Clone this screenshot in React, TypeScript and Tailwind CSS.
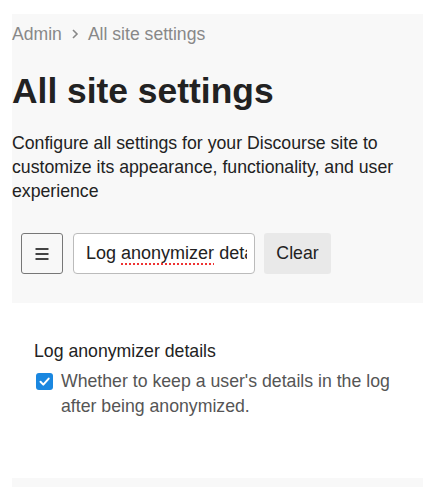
export default function App() {
  return (
    <div className="min-h-[500px] bg-white px-3 pt-[14px] font-['Liberation_Sans',Arial,sans-serif] text-[#222]">
      <section className="bg-[#f8f8f8] pb-[29px]">
        <nav className="flex items-center gap-1 pt-[8px] text-[17.6px] leading-[24px] text-[#888]">
          <span>Admin</span>
          <svg width="14" height="14" viewBox="0 0 14 14" className="mx-[2px]">
            <path d="M5 3l4 4-4 4" fill="none" stroke="#888" strokeWidth="1.6" />
          </svg>
          <span>All site settings</span>
        </nav>
        <h1 className="mt-[23px] text-[35.4px] font-bold leading-[44px] text-[#222]">All site settings</h1>
        <p className="mt-[18px] pr-4 text-[17.7px] leading-[24px] text-[#222]">
          Configure all settings for your Discourse site to customize its appearance, functionality, and user experience
        </p>
        <div className="mt-[30px] flex items-center pl-[9px]">
          <button className="flex h-[41px] w-[42px] items-center justify-center rounded-[3px] border border-[#777] bg-[#f8f8f8]">
            <svg width="16" height="14" viewBox="0 0 16 14">
              <path d="M1.5 2h13M1.5 7h13M1.5 12h13" stroke="#444" strokeWidth="1.8" />
            </svg>
          </button>
          <div className="ml-[10px] flex h-[41px] w-[182px] items-center rounded-[4px] border border-[#bbb] bg-white pl-[12px] pr-[7px] text-[18px] text-[#222]">
            <span className="overflow-hidden whitespace-nowrap">
              Log{" "}
              <span className="underline decoration-[#e33] decoration-dotted decoration-[1.5px] underline-offset-[4px]">anonymizer</span>{" "}
              details
            </span>
          </div>
          <button className="ml-[9px] h-[41px] w-[67px] rounded-[3px] bg-[#e9e9e9] text-[17.7px] text-[#222]">Clear</button>
        </div>
      </section>
      <section className="px-[22px] pt-[36px] pb-[59px]">
        <h3 className="text-[17.7px] leading-[24px] text-[#222]">Log anonymizer details</h3>
        <label className="mt-[6px] flex items-start gap-[8px]">
          <span className="ml-[2px] mt-[4px] flex h-[17px] w-[17px] shrink-0 items-center justify-center rounded-[3px] bg-[#1a87e0]">
            <svg width="13" height="13" viewBox="0 0 13 13">
              <path d="M2.5 6.8l2.8 2.8 5.4-6" fill="none" stroke="white" strokeWidth="2" strokeLinecap="round" strokeLinejoin="round" />
            </svg>
          </span>
          <span className="text-[17.7px] leading-[25px] text-[#555]">
            Whether to keep a user's details in the log after being anonymized.
          </span>
        </label>
      </section>
      <div className="h-[9px] bg-[#f8f8f8]" />
    </div>
  );
}
